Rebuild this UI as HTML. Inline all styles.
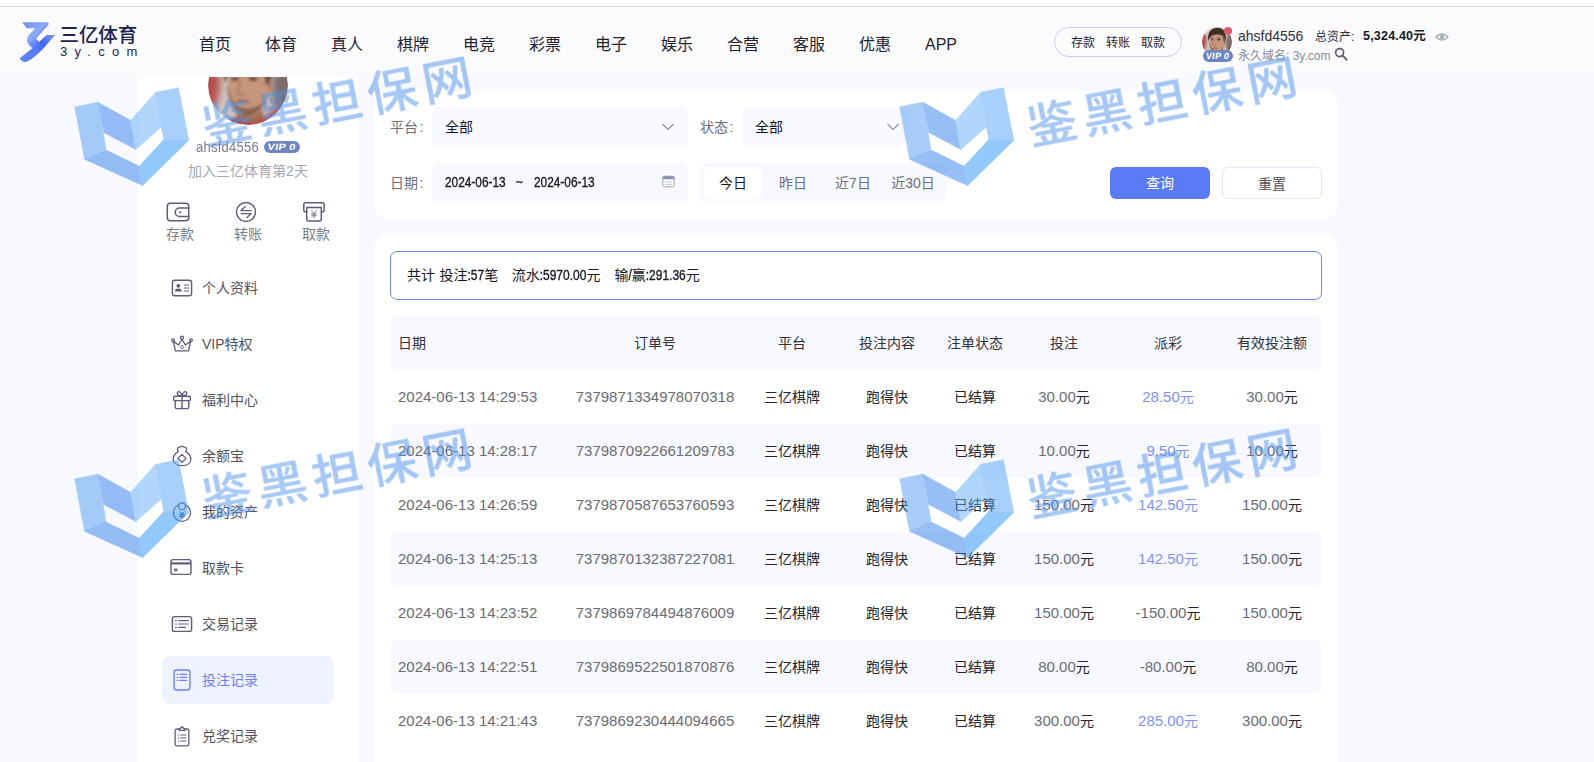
<!DOCTYPE html>
<html lang="zh-CN">
<head>
<meta charset="utf-8">
<title>投注记录 - 三亿体育</title>
<style>
*{box-sizing:border-box;margin:0;padding:0}
html,body{width:1594px;height:762px;overflow:hidden;background:#f8f9fe}
body{font-family:"Liberation Sans","Noto Sans CJK SC",sans-serif;color:#30313d;position:relative;font-size:14px}
.abs{position:absolute}
/* top strip */
#topstrip{left:0;top:0;width:1594px;height:6px;background:#fff}
#topline{left:0;top:6px;width:1594px;height:1px;background:#d9d9dc}
/* header */
#header{left:0;top:7px;width:1594px;height:70px;background:#fbfbfe;z-index:5}
.nav{position:absolute;top:26px;font-size:16px;line-height:24px;color:#1f2233;width:66px;text-align:center;white-space:nowrap}
#logo-cn{left:59.5px;top:16px;font-size:19.5px;line-height:24px;font-weight:500;color:#1e2350;letter-spacing:-0.1px;white-space:nowrap}
#logo-en{left:60px;top:37px;font-size:13px;line-height:16px;color:#1e2350;letter-spacing:7.3px;white-space:nowrap}
#pill{left:1054px;top:20px;width:128px;height:30px;border:1px solid #c9ccf7;border-radius:15px;background:#fcfcff;font-size:12px;line-height:28px;color:#23242e;white-space:nowrap}
#pill span{position:absolute;top:1px}
#hd-ava{left:1202px;top:20px;width:30px;height:30px;border-radius:50%;overflow:hidden}
.vip{position:absolute;background:#6d86c2;border-radius:7px;color:#fff;font-weight:700;font-style:italic;text-align:center;white-space:nowrap}
#hd-name{left:1238px;top:19.6px;font-size:14px;line-height:18px;color:#30313d;white-space:nowrap}
#hd-asset{left:1315px;top:22px;font-size:12px;line-height:16px;color:#30313d;white-space:nowrap}
#hd-amt{left:1363px;top:21px;letter-spacing:.2px;font-size:12.5px;line-height:16px;font-weight:700;color:#16171f;white-space:nowrap}
#hd-dom{left:1238px;top:40.5px;font-size:12px;line-height:16px;color:#8a8c99;white-space:nowrap}
/* sidebar */
#side{left:138px;top:76px;width:220px;height:686px;background:#fff}
.mi{position:absolute;left:64px;font-size:14px;line-height:20px;color:#50525f;white-space:nowrap}
.qa{position:absolute;font-size:14px;line-height:18px;color:#7a7c8a;width:60px;text-align:center;white-space:nowrap}
/* content */
.card{position:absolute;background:#fff;border-radius:13px}
.lbl{position:absolute;font-size:14px;line-height:20px;color:#6c6e7c;white-space:nowrap}
.inp{position:absolute;background:#f8f9fe;border-radius:8px;height:40px}
.inp span{position:absolute;top:10px;font-size:14px;line-height:20px;color:#16171f;white-space:nowrap}

.dt{font-size:15px !important;top:9.3px !important;transform:scaleX(.79);transform-origin:0 50%;-webkit-text-stroke:.35px #16171f}
.qb{position:absolute;top:173px;width:60px;text-align:center;font-size:14px;line-height:20px;color:#6c6e7c;white-space:nowrap}
.btn{position:absolute;top:167px;width:100px;height:32px;border-radius:6px;text-align:center;font-size:14px;line-height:32px;white-space:nowrap}
#sum{font-size:14px;line-height:20px;color:#16171f;white-space:nowrap}
.cd{display:inline-block;font-weight:400;font-size:12px;transform:scaleY(1.2);transform-origin:50% 72%;-webkit-text-stroke:.3px #16171f}
.th{position:absolute;width:120px;text-align:center;font-size:14px;line-height:20px;color:#30313d;white-space:nowrap}
.td{position:absolute;width:120px;text-align:center;font-size:14px;line-height:20px;color:#50525f;white-space:nowrap}
.td.dk{color:#23242e}
.td.num{color:#6a6b76;font-size:15px}
.td.num i{font-style:normal;color:#23242e;font-size:14px}
.td.win,.td.win i{color:#7d93f3}
.face{background:radial-gradient(ellipse 34% 46% at 50% 52%,#c99479 0,#b57d62 60%,rgba(150,90,70,0) 100%),radial-gradient(ellipse 42% 30% at 50% 18%,#4a3328 0,#5a3d30 70%,rgba(90,60,48,0) 100%),linear-gradient(90deg,#b8423f 0,#c9b3ab 35%,#d8d0cc 65%,#a63a3a 100%)}
</style>
</head>
<body>
<div class="abs" id="topstrip"></div>
<div class="abs" id="topline"></div>

<!-- SIDEBAR -->
<div class="abs" id="side">
<div class="abs" style="left:24px;top:580px;width:172px;height:48px;border-radius:8px;background:#eff2ff"></div>

<div class="abs" style="left:70px;top:-31.5px;width:80px;height:80px;border-radius:50%;overflow:hidden"><svg width="80" height="80" viewBox="0 0 80 80" style="display:block">
<defs><filter id="blb" x="-20%" y="-20%" width="140%" height="140%"><feGaussianBlur stdDeviation="1.5"/></filter><filter id="bbb" x="-30%" y="-30%" width="160%" height="160%"><feGaussianBlur stdDeviation="3.5"/></filter><clipPath id="ccb"><circle cx="40" cy="40" r="40"/></clipPath></defs>
<g clip-path="url(#ccb)">
<rect width="80" height="80" fill="#cdc2be"/>
<g filter="url(#bbb)">
<ellipse cx="1" cy="38" rx="11" ry="26" fill="#b5504b"/>
<ellipse cx="77" cy="44" rx="13" ry="28" fill="#7d6c69"/>
<ellipse cx="74" cy="74" rx="16" ry="10" fill="#a9423e"/>
<ellipse cx="14" cy="8" rx="16" ry="10" fill="#ddd6d2"/>
</g>
<g filter="url(#blb)">
<path d="M10,86 Q18,73 30,72 L52,71 Q64,73 72,86 Z" fill="#b0504a"/>
<path d="M27,58 L54,56 L55,74 Q42,80 29,73 Z" fill="#a06c56"/>
<ellipse cx="60.5" cy="42" rx="3.6" ry="7" fill="#b47c66"/>
<ellipse cx="40" cy="43" rx="20.5" ry="29" fill="#c6967d"/>
<path d="M19,40 Q21,66 38,72 Q54,70 60,48 Q56,60 46,62 Q36,66 28,60 Q22,52 19,40 Z" fill="#7d5a49" opacity=".85"/>
<path d="M17,38 Q12,5 40,2 Q67,3 63,38 Q61,28 56,23 Q42,18 28,22 Q20,26 17,38 Z" fill="#3f2d24"/>
<path d="M56,20 Q62,28 61,40 L57,38 Q58,28 54,22 Z" fill="#5a4236"/>
<ellipse cx="27" cy="34" rx="4" ry="1.6" fill="#3a2822"/>
<ellipse cx="45" cy="34" rx="4.4" ry="1.7" fill="#3a2822"/>
<path d="M21,30 Q27,27 32,30 M39,30 Q45,27 51,30" stroke="#4e382e" stroke-width="1.6" fill="none"/>
<path d="M33,36 Q30,46 29,48 Q32,51 37,49" stroke="#9a6a55" stroke-width="1.6" fill="none"/>
<path d="M28,57 Q34,55 42,57" stroke="#7a4a40" stroke-width="1.8" fill="none"/>
</g>
</g></svg></div>
<div class="abs" style="left:58px;top:62.5px;font-size:13px;line-height:18px;color:#7c7b93;letter-spacing:0.25px;white-space:nowrap;transform:scaleY(1.1);transform-origin:0 60%">ahsfd4556</div>
<div class="vip" style="left:126px;top:65px;width:36px;height:12px;font-size:9px;line-height:12px;border-radius:6px"><span style="display:inline-block;transform:scaleX(1.2) skewX(-9deg);font-style:normal;letter-spacing:.3px">VIP 0</span></div>
<div class="abs" style="left:0;top:86px;width:220px;text-align:center;font-size:14px;line-height:18px;color:#a4a6b3;white-space:nowrap">加入三亿体育第2天</div>
<svg class="abs" style="left:28.1px;top:123.9px" width="24" height="24" viewBox="0 0 24 24" fill="none" stroke="#5e5c7a" stroke-width="1.5" stroke-linecap="round" stroke-linejoin="round"><rect x="1.3" y="3.2" width="21.4" height="17.6" rx="3"/><path d="M22.7,8 H13.5 a4,4 0 0 0 0,8.6 H22.7"/><circle cx="14.2" cy="12.3" r="1.1" fill="#5e5c7a" stroke="none"/></svg>
<svg class="abs" style="left:96.2px;top:123.9px" width="24" height="24" viewBox="0 0 24 24" fill="none" stroke="#5e5c7a" stroke-width="1.4" stroke-linecap="round" stroke-linejoin="round"><circle cx="12" cy="12" r="9.5"/><path d="M11.2,6.8 L7,10.6 H17.2 M7,13.6 H17.2 L13,17.4"/></svg>
<svg class="abs" style="left:164.1px;top:123.5px" width="24" height="24" viewBox="0 0 24 24" fill="none" stroke="#5e5c7a" stroke-width="1.5" stroke-linecap="round" stroke-linejoin="round"><path d="M4.6,11.8 H3.4 a1.6,1.6 0 0 1 -1.6,-1.6 V4.4 a1.6,1.6 0 0 1 1.6,-1.6 H20.6 a1.6,1.6 0 0 1 1.6,1.6 V10.2 a1.6,1.6 0 0 1 -1.6,1.6 H19.4"/><path d="M4.7,7.4 H19.3 V19.4 a1.6,1.6 0 0 1 -1.6,1.6 H6.3 a1.6,1.6 0 0 1 -1.6,-1.6 Z"/><path d="M9.6,10.8 L12,13.8 L14.4,10.8 M12,13.8 V17.8 M9.6,14 H14.4 M9.6,15.8 H14.4" stroke-width="0.8"/></svg>
<svg class="abs" style="left:31.8px;top:199.9px" width="24" height="24" viewBox="0 0 24 24" fill="none" stroke="#5e5c7a" stroke-width="1.4" stroke-linecap="round" stroke-linejoin="round"><rect x="2.4" y="4.3" width="19.2" height="15.4" rx="2.2"/><circle cx="8.3" cy="9.8" r="1.9" fill="#5e5c7a" stroke="none"/><path d="M4.9,15.6 a3.4,3.2 0 0 1 6.8,0 Z" fill="#5e5c7a" stroke="none"/><path d="M14.4,9 H18.6 M14.4,12 H18.6 M14.4,15 H18.6" stroke-width="1.1"/></svg>
<svg class="abs" style="left:32.2px;top:256.0px" width="24" height="24" viewBox="0 0 24 24" fill="none" stroke="#5e5c7a" stroke-width="1.3" stroke-linecap="round" stroke-linejoin="round"><path d="M5.4,18.8 H18.6 L20.6,9.4 L15.4,13 L12,7.2 L8.6,13 L3.4,9.4 Z"/><circle cx="12" cy="5.6" r="1.5"/><circle cx="3" cy="8.2" r="1.3"/><circle cx="21" cy="8.2" r="1.3"/><path d="M12,13.4 L10.4,15.8 L12,17 L13.6,15.8 Z" stroke-width="0.9"/></svg>
<svg class="abs" style="left:31.7px;top:311.9px" width="24" height="24" viewBox="0 0 24 24" fill="none" stroke="#5e5c7a" stroke-width="1.4" stroke-linecap="round" stroke-linejoin="round"><rect x="3.7" y="8.2" width="16.6" height="4.4" rx="1"/><path d="M5.2,12.6 V19 a1.6,1.6 0 0 0 1.6,1.6 H17.2 a1.6,1.6 0 0 0 1.6,-1.6 V12.6"/><path d="M12,8.2 V20.6"/><path d="M12,8 C9,8 6.6,6.6 7.4,4.6 C8.4,2.4 11.2,4 12,8 C12.8,4 15.6,2.4 16.6,4.6 C17.4,6.6 15,8 12,8 Z"/></svg>
<svg class="abs" style="left:32.2px;top:367.6px" width="24" height="24" viewBox="0 0 24 24" fill="none" stroke="#5e5c7a" stroke-width="1.3" stroke-linecap="round" stroke-linejoin="round"><path d="M8.4,7.4 C6.6,5.4 7.6,2.8 9.8,3.2 C10.8,2 13.2,2 14.2,3.2 C16.4,2.8 17.4,5.4 15.6,7.4 C19,9.4 20.8,12.4 20.8,15.2 C20.8,19 17.4,21.6 12,21.6 C6.6,21.6 3.2,19 3.2,15.2 C3.2,12.4 5,9.4 8.4,7.4 Z"/><path d="M12,10.4 L16,14.4 L12,18.4 L8,14.4 Z"/></svg>
<svg class="abs" style="left:32.2px;top:423.8px" width="24" height="24" viewBox="0 0 24 24" fill="none" stroke="#5e5c7a" stroke-width="1.2" stroke-linecap="round" stroke-linejoin="round"><circle cx="12" cy="12.8" r="8.6"/><circle cx="12" cy="6.2" r="3.4" fill="#fff"/><path d="M9.4,11 L12,14.2 L14.6,11 M12,14.2 V18.4 M9.6,14.6 H14.4 M9.6,16.4 H14.4" stroke-width="1"/></svg>
<svg class="abs" style="left:31.4px;top:479.4px" width="24" height="24" viewBox="0 0 24 24" fill="none" stroke="#5e5c7a" stroke-width="1.4" stroke-linecap="round" stroke-linejoin="round"><rect x="2" y="4.6" width="20" height="14.8" rx="2.2"/><path d="M2,8.4 H22" stroke-width="2.2" stroke-linecap="butt"/><rect x="5.2" y="13.6" width="3.2" height="2.6" fill="#5e5c7a" stroke="none"/></svg>
<svg class="abs" style="left:31.8px;top:535.6px" width="24" height="24" viewBox="0 0 24 24" fill="none" stroke="#5e5c7a" stroke-width="1.4" stroke-linecap="round" stroke-linejoin="round"><rect x="2.4" y="4.6" width="19.2" height="14.8" rx="2.2"/><path d="M5.6,8.6 H6.4 M8.8,8.6 H18.4 M5.6,12 H6.4 M8.8,12 H18.4 M5.6,15.4 H6.4 M8.8,15.4 H15.4" stroke-width="1.2"/></svg>
<svg class="abs" style="left:32.1px;top:591.5px" width="24" height="24" viewBox="0 0 24 24" fill="none" stroke="#6c7ff3" stroke-width="1.4" stroke-linecap="round" stroke-linejoin="round"><rect x="4.1" y="2" width="15.8" height="20" rx="2.4"/><path d="M7.2,6.4 H7.8 M10,6.4 H16.8 M7.2,9.4 H7.8 M10,9.4 H16.8 M7.2,12.4 H7.8 M10,12.4 H16.8" stroke-width="1.2"/></svg>
<svg class="abs" style="left:32.2px;top:647.8px" width="24" height="24" viewBox="0 0 24 24" fill="none" stroke="#5e5c7a" stroke-width="1.3" stroke-linecap="round" stroke-linejoin="round"><path d="M8.6,5 H6.9 a1.8,1.8 0 0 0 -1.8,1.8 V20 a1.8,1.8 0 0 0 1.8,1.8 H17.1 a1.8,1.8 0 0 0 1.8,-1.8 V6.8 a1.8,1.8 0 0 0 -1.8,-1.8 H15.4"/><path d="M9,6.4 V4.6 H10.6 a1.4,1.6 0 0 1 2.8,0 H15 V6.4 Z"/><path d="M8.2,11 H8.8 M10.6,11 H15.8 M8.2,14 H8.8 M10.6,14 H15.8 M8.2,17 H8.8 M10.6,17 H15.8" stroke-width="1.1"/></svg>
<div class="qa" style="left:12px;top:149px">存款</div>
<div class="qa" style="left:80px;top:149px">转账</div>
<div class="qa" style="left:148px;top:149px">取款</div>
<div class="mi" style="top:202px">个人资料</div>
<div class="mi" style="top:258px">VIP特权</div>
<div class="mi" style="top:314px">福利中心</div>
<div class="mi" style="top:370px">余额宝</div>
<div class="mi" style="top:426px">我的资产</div>
<div class="mi" style="top:482px">取款卡</div>
<div class="mi" style="top:538px">交易记录</div>
<div class="mi" style="top:594px;color:#6c81f2">投注记录</div>
<div class="mi" style="top:650px">兑奖记录</div>
</div>

<!-- CONTENT -->
<div id="content">
<div class="card" style="left:374px;top:91px;width:964px;height:128px"></div>
<div class="lbl" style="left:390px;top:117px">平台<span style="margin-left:1.5px">:</span></div>
<div class="inp" style="left:432px;top:107px;width:256px"><span style="left:13px">全部</span>
<svg class="abs" style="left:229px;top:15px" width="14" height="10" viewBox="0 0 14 10"><path d="M1.5,2 L7,7.5 L12.5,2" fill="none" stroke="#8f919e" stroke-width="1.2"/></svg></div>
<div class="lbl" style="left:700px;top:117px">状态<span style="margin-left:1.5px">:</span></div>
<div class="inp" style="left:742px;top:107px;width:164px"><span style="left:13px">全部</span>
<svg class="abs" style="left:144px;top:15px" width="14" height="10" viewBox="0 0 14 10"><path d="M1.5,2 L7,7.5 L12.5,2" fill="none" stroke="#8f919e" stroke-width="1.2"/></svg></div>
<div class="lbl" style="left:390px;top:173px">日期<span style="margin-left:1.5px">:</span></div>
<div class="inp" style="left:432px;top:163px;width:256px"><span class="dt" style="left:13px">2024-06-13</span><span class="dt" style="left:84px">~</span><span class="dt" style="left:102px">2024-06-13</span>
<svg class="abs" style="left:230px;top:12px" width="13" height="13" viewBox="0 0 13 13"><rect x="0.8" y="1.2" width="11.4" height="10.6" rx="1.6" fill="#fff" stroke="#9b9dbd" stroke-width="1"/><rect x="0.8" y="1.2" width="11.4" height="3" rx="1.2" fill="#8d8fb0"/><path d="M3,7h7M3,9.4h7" stroke="#c3c4d6" stroke-width="1"/></svg></div>
<div class="inp" style="left:700px;top:163px;width:247px"></div>
<div class="abs" style="left:704px;top:167px;width:58px;height:32px;border-radius:6px;background:#fff"></div>
<div class="qb" style="left:703px;color:#16171f">今日</div>
<div class="qb" style="left:763px">昨日</div>
<div class="qb" style="left:823px">近7日</div>
<div class="qb" style="left:883px">近30日</div>
<div class="btn" style="left:1110px;background:#5b7bf6;color:#fff">查询</div>
<div class="btn" style="left:1222px;background:#fff;color:#50525f;border:1px solid #e3e8fb">重置</div>

<div class="card" style="left:374px;top:235px;width:964px;height:560px"></div>
<div class="abs" style="left:390px;top:251px;width:932px;height:49px;border:1px solid #7286f1;border-radius:7px;background:#fff"></div>
<div class="abs" id="sum" style="left:407px;top:264.5px">共计<span style="margin-left:4.5px">投注<b class="cd">:57</b>笔</span><span style="margin-left:13.5px">流水<b class="cd">:5970.00</b>元</span><span style="margin-left:14px">输<b class="cd">/</b>赢<b class="cd">:291.36</b>元</span></div>
<div class="abs" style="left:390px;top:316px;width:932px;height:54px;border-radius:8px;background:#f8f9fe"></div>
<div class="th" style="left:398px;top:333px;width:auto;text-align:left">日期</div>
<div class="th" style="left:595px;top:333px">订单号</div>
<div class="th" style="left:732px;top:333px">平台</div>
<div class="th" style="left:827px;top:333px">投注内容</div>
<div class="th" style="left:915px;top:333px">注单状态</div>
<div class="th" style="left:1004px;top:333px">投注</div>
<div class="th" style="left:1108px;top:333px">派彩</div>
<div class="th" style="left:1212px;top:333px">有效投注额</div>
<div class="td num" style="left:398px;top:387px;width:auto;text-align:left">2024-06-13 14:29:53</div><div class="td num" style="left:595px;top:387px;width:200px;margin-left:-40px">7379871334978070318</div><div class="td dk" style="left:732px;top:387px">三亿棋牌</div><div class="td dk" style="left:827px;top:387px">跑得快</div><div class="td dk" style="left:915px;top:387px">已结算</div><div class="td num" style="left:1004px;top:387px">30.00<i>元</i></div><div class="td num win" style="left:1108px;top:387px">28.50<i>元</i></div><div class="td num" style="left:1212px;top:387px">30.00<i>元</i></div>
<div class="abs" style="left:390px;top:424px;width:932px;height:54px;border-radius:8px;background:#f8f9fe"></div>
<div class="td num" style="left:398px;top:441px;width:auto;text-align:left">2024-06-13 14:28:17</div><div class="td num" style="left:595px;top:441px;width:200px;margin-left:-40px">7379870922661209783</div><div class="td dk" style="left:732px;top:441px">三亿棋牌</div><div class="td dk" style="left:827px;top:441px">跑得快</div><div class="td dk" style="left:915px;top:441px">已结算</div><div class="td num" style="left:1004px;top:441px">10.00<i>元</i></div><div class="td num win" style="left:1108px;top:441px">9.50<i>元</i></div><div class="td num" style="left:1212px;top:441px">10.00<i>元</i></div>
<div class="td num" style="left:398px;top:495px;width:auto;text-align:left">2024-06-13 14:26:59</div><div class="td num" style="left:595px;top:495px;width:200px;margin-left:-40px">7379870587653760593</div><div class="td dk" style="left:732px;top:495px">三亿棋牌</div><div class="td dk" style="left:827px;top:495px">跑得快</div><div class="td dk" style="left:915px;top:495px">已结算</div><div class="td num" style="left:1004px;top:495px">150.00<i>元</i></div><div class="td num win" style="left:1108px;top:495px">142.50<i>元</i></div><div class="td num" style="left:1212px;top:495px">150.00<i>元</i></div>
<div class="abs" style="left:390px;top:532px;width:932px;height:54px;border-radius:8px;background:#f8f9fe"></div>
<div class="td num" style="left:398px;top:549px;width:auto;text-align:left">2024-06-13 14:25:13</div><div class="td num" style="left:595px;top:549px;width:200px;margin-left:-40px">7379870132387227081</div><div class="td dk" style="left:732px;top:549px">三亿棋牌</div><div class="td dk" style="left:827px;top:549px">跑得快</div><div class="td dk" style="left:915px;top:549px">已结算</div><div class="td num" style="left:1004px;top:549px">150.00<i>元</i></div><div class="td num win" style="left:1108px;top:549px">142.50<i>元</i></div><div class="td num" style="left:1212px;top:549px">150.00<i>元</i></div>
<div class="td num" style="left:398px;top:603px;width:auto;text-align:left">2024-06-13 14:23:52</div><div class="td num" style="left:595px;top:603px;width:200px;margin-left:-40px">7379869784494876009</div><div class="td dk" style="left:732px;top:603px">三亿棋牌</div><div class="td dk" style="left:827px;top:603px">跑得快</div><div class="td dk" style="left:915px;top:603px">已结算</div><div class="td num" style="left:1004px;top:603px">150.00<i>元</i></div><div class="td num" style="left:1108px;top:603px">-150.00<i>元</i></div><div class="td num" style="left:1212px;top:603px">150.00<i>元</i></div>
<div class="abs" style="left:390px;top:640px;width:932px;height:54px;border-radius:8px;background:#f8f9fe"></div>
<div class="td num" style="left:398px;top:657px;width:auto;text-align:left">2024-06-13 14:22:51</div><div class="td num" style="left:595px;top:657px;width:200px;margin-left:-40px">7379869522501870876</div><div class="td dk" style="left:732px;top:657px">三亿棋牌</div><div class="td dk" style="left:827px;top:657px">跑得快</div><div class="td dk" style="left:915px;top:657px">已结算</div><div class="td num" style="left:1004px;top:657px">80.00<i>元</i></div><div class="td num" style="left:1108px;top:657px">-80.00<i>元</i></div><div class="td num" style="left:1212px;top:657px">80.00<i>元</i></div>
<div class="td num" style="left:398px;top:711px;width:auto;text-align:left">2024-06-13 14:21:43</div><div class="td num" style="left:595px;top:711px;width:200px;margin-left:-40px">7379869230444094665</div><div class="td dk" style="left:732px;top:711px">三亿棋牌</div><div class="td dk" style="left:827px;top:711px">跑得快</div><div class="td dk" style="left:915px;top:711px">已结算</div><div class="td num" style="left:1004px;top:711px">300.00<i>元</i></div><div class="td num win" style="left:1108px;top:711px">285.00<i>元</i></div><div class="td num" style="left:1212px;top:711px">300.00<i>元</i></div>
</div>

<!-- HEADER -->
<div class="abs" id="header">
<svg class="abs" style="left:14px;top:7px" width="50" height="54" viewBox="0 0 706 762">
<defs>
<linearGradient id="lg1" x1="0" y1="0" x2="1" y2="1"><stop offset="0" stop-color="#6f8df8"/><stop offset="0.45" stop-color="#8eaafc"/><stop offset="0.75" stop-color="#4a6df4"/><stop offset="1" stop-color="#5a7cf6"/></linearGradient>
<linearGradient id="lg2" x1="1" y1="0" x2="0" y2="1"><stop offset="0" stop-color="#7c99fa"/><stop offset="0.35" stop-color="#3f64f3"/><stop offset="0.6" stop-color="#5a7cf6"/><stop offset="1" stop-color="#6283f7"/></linearGradient>
</defs>
<path d="M580,295 L460,295 L250,490 L80,625 Q110,690 190,672 Q300,610 420,480 Z" fill="url(#lg2)"/>
<path d="M115,115 L478,115 Q502,122 486,150 L310,350 L410,440 L405,485 L290,505 Q140,410 200,310 L300,200 L180,200 Z" fill="url(#lg1)"/>
</svg>
<div class="abs" id="logo-cn">三亿体育</div>
<div class="abs" id="logo-en">3y.com</div>
<div class="nav" style="left:182px">首页</div><div class="nav" style="left:248px">体育</div><div class="nav" style="left:314px">真人</div><div class="nav" style="left:380px">棋牌</div><div class="nav" style="left:446px">电竞</div><div class="nav" style="left:512px">彩票</div><div class="nav" style="left:578px">电子</div><div class="nav" style="left:644px">娱乐</div><div class="nav" style="left:710px">合营</div><div class="nav" style="left:776px">客服</div><div class="nav" style="left:842px">优惠</div><div class="nav" style="left:908px">APP</div>
<div class="abs" id="pill"><span style="left:16px">存款</span><span style="left:51px">转账</span><span style="left:86px">取款</span></div>
<div class="abs" id="hd-ava"><svg width="30" height="30" viewBox="0 0 80 80" style="display:block">
<defs><filter id="bla" x="-20%" y="-20%" width="140%" height="140%"><feGaussianBlur stdDeviation="1.5"/></filter><filter id="bba" x="-30%" y="-30%" width="160%" height="160%"><feGaussianBlur stdDeviation="3.5"/></filter><clipPath id="cca"><circle cx="40" cy="40" r="40"/></clipPath></defs>
<g clip-path="url(#cca)">
<rect width="80" height="80" fill="#cdc2be"/>
<g filter="url(#bba)">
<ellipse cx="1" cy="38" rx="11" ry="26" fill="#b5504b"/>
<ellipse cx="77" cy="44" rx="13" ry="28" fill="#7d6c69"/>
<ellipse cx="74" cy="74" rx="16" ry="10" fill="#a9423e"/>
<ellipse cx="14" cy="8" rx="16" ry="10" fill="#ddd6d2"/>
</g>
<g filter="url(#bla)">
<path d="M10,86 Q18,73 30,72 L52,71 Q64,73 72,86 Z" fill="#b0504a"/>
<path d="M27,58 L54,56 L55,74 Q42,80 29,73 Z" fill="#a06c56"/>
<ellipse cx="60.5" cy="42" rx="3.6" ry="7" fill="#b47c66"/>
<ellipse cx="40" cy="43" rx="20.5" ry="29" fill="#c6967d"/>
<path d="M19,40 Q21,66 38,72 Q54,70 60,48 Q56,60 46,62 Q36,66 28,60 Q22,52 19,40 Z" fill="#7d5a49" opacity=".85"/>
<path d="M17,38 Q12,5 40,2 Q67,3 63,38 Q61,28 56,23 Q42,18 28,22 Q20,26 17,38 Z" fill="#3f2d24"/>
<path d="M56,20 Q62,28 61,40 L57,38 Q58,28 54,22 Z" fill="#5a4236"/>
<ellipse cx="27" cy="34" rx="4" ry="1.6" fill="#3a2822"/>
<ellipse cx="45" cy="34" rx="4.4" ry="1.7" fill="#3a2822"/>
<path d="M21,30 Q27,27 32,30 M39,30 Q45,27 51,30" stroke="#4e382e" stroke-width="1.6" fill="none"/>
<path d="M33,36 Q30,46 29,48 Q32,51 37,49" stroke="#9a6a55" stroke-width="1.6" fill="none"/>
<path d="M28,57 Q34,55 42,57" stroke="#7a4a40" stroke-width="1.8" fill="none"/>
</g>
</g></svg></div>
<div class="abs" style="left:1224px;top:20px;width:8px;height:8px;border-radius:50%;background:#e2586d"></div>
<div class="vip" style="left:1203px;top:43px;width:30px;height:12px;font-size:9px;line-height:12px"><span style="display:inline-block;transform:scaleX(1.0) skewX(-9deg);font-style:normal;letter-spacing:.3px">VIP 0</span></div>
<div class="abs" id="hd-name">ahsfd4556</div>
<div class="abs" id="hd-asset">总资产:</div>
<div class="abs" id="hd-amt">5,324.40元</div>
<svg class="abs" style="left:1435px;top:24px" width="14" height="12" viewBox="0 0 14 12"><path d="M1,6 Q7,0 13,6 Q7,12 1,6 Z" fill="none" stroke="#a9abb6" stroke-width="1.4"/><circle cx="7" cy="6" r="2.2" fill="#a9abb6"/></svg>
<div class="abs" id="hd-dom">永久域名: 3y.com</div>
<svg class="abs" style="left:1334px;top:40px" width="14" height="14" viewBox="0 0 14 14"><circle cx="5.6" cy="5.6" r="4" fill="none" stroke="#5c5e6b" stroke-width="1.7"/><path d="M8.6,8.6 L12.6,12.6" stroke="#5c5e6b" stroke-width="2" stroke-linecap="round"/></svg>
</div>

<!-- WATERMARKS -->
<div id="wm"><svg class="abs" style="left:0;top:0;z-index:10;pointer-events:none" width="1594" height="762" viewBox="0 0 1594 762">
<g transform="translate(0,0)" opacity="0.5">
<polygon points="74.8,106.9 97.9,102.3 106.0,150.1 84.6,159.2" fill="rgb(81,155,241)" stroke="rgb(81,155,241)" stroke-width="0.7" stroke-linejoin="round"/>
<polygon points="97.9,102.3 130.6,120.4 135.9,149.4 103.9,132.5" fill="rgb(49,125,237)" stroke="rgb(49,125,237)" stroke-width="0.7" stroke-linejoin="round"/>
<polygon points="130.6,120.4 155.5,92.4 161.5,126.8 135.9,149.4" fill="rgb(97,173,247)" stroke="rgb(97,173,247)" stroke-width="0.7" stroke-linejoin="round"/>
<polygon points="155.5,92.4 178.4,87.8 188.7,140.3 163.8,139.6 161.5,126.8" fill="rgb(83,161,245)" stroke="rgb(83,161,245)" stroke-width="0.7" stroke-linejoin="round"/>
<polygon points="84.6,159.2 106.0,150.1 139.2,166.3 142.7,185.6" fill="rgb(47,125,235)" stroke="rgb(47,125,235)" stroke-width="0.7" stroke-linejoin="round"/>
<polygon points="139.2,166.3 163.8,139.6 188.7,140.3 142.7,185.6" fill="rgb(39,145,247)" stroke="rgb(39,145,247)" stroke-width="0.7" stroke-linejoin="round"/>
<g transform="translate(337,101.5) rotate(-11) scale(1,0.93)"><text x="3" y="18.5" text-anchor="middle" font-family="'Liberation Sans','Noto Sans CJK SC',sans-serif" font-size="50" font-weight="500" letter-spacing="6" fill="rgb(79,145,233)" stroke="rgb(79,145,233)" stroke-width="0.3" stroke-linejoin="round">鉴黑担保网</text></g>
</g>
<g transform="translate(825,0)" opacity="0.5">
<polygon points="74.8,106.9 97.9,102.3 106.0,150.1 84.6,159.2" fill="rgb(81,155,241)" stroke="rgb(81,155,241)" stroke-width="0.7" stroke-linejoin="round"/>
<polygon points="97.9,102.3 130.6,120.4 135.9,149.4 103.9,132.5" fill="rgb(49,125,237)" stroke="rgb(49,125,237)" stroke-width="0.7" stroke-linejoin="round"/>
<polygon points="130.6,120.4 155.5,92.4 161.5,126.8 135.9,149.4" fill="rgb(97,173,247)" stroke="rgb(97,173,247)" stroke-width="0.7" stroke-linejoin="round"/>
<polygon points="155.5,92.4 178.4,87.8 188.7,140.3 163.8,139.6 161.5,126.8" fill="rgb(83,161,245)" stroke="rgb(83,161,245)" stroke-width="0.7" stroke-linejoin="round"/>
<polygon points="84.6,159.2 106.0,150.1 139.2,166.3 142.7,185.6" fill="rgb(47,125,235)" stroke="rgb(47,125,235)" stroke-width="0.7" stroke-linejoin="round"/>
<polygon points="139.2,166.3 163.8,139.6 188.7,140.3 142.7,185.6" fill="rgb(39,145,247)" stroke="rgb(39,145,247)" stroke-width="0.7" stroke-linejoin="round"/>
<g transform="translate(337,101.5) rotate(-11) scale(1,0.93)"><text x="3" y="18.5" text-anchor="middle" font-family="'Liberation Sans','Noto Sans CJK SC',sans-serif" font-size="50" font-weight="500" letter-spacing="6" fill="rgb(79,145,233)" stroke="rgb(79,145,233)" stroke-width="0.3" stroke-linejoin="round">鉴黑担保网</text></g>
</g>
<g transform="translate(0,372)" opacity="0.5">
<polygon points="74.8,106.9 97.9,102.3 106.0,150.1 84.6,159.2" fill="rgb(81,155,241)" stroke="rgb(81,155,241)" stroke-width="0.7" stroke-linejoin="round"/>
<polygon points="97.9,102.3 130.6,120.4 135.9,149.4 103.9,132.5" fill="rgb(49,125,237)" stroke="rgb(49,125,237)" stroke-width="0.7" stroke-linejoin="round"/>
<polygon points="130.6,120.4 155.5,92.4 161.5,126.8 135.9,149.4" fill="rgb(97,173,247)" stroke="rgb(97,173,247)" stroke-width="0.7" stroke-linejoin="round"/>
<polygon points="155.5,92.4 178.4,87.8 188.7,140.3 163.8,139.6 161.5,126.8" fill="rgb(83,161,245)" stroke="rgb(83,161,245)" stroke-width="0.7" stroke-linejoin="round"/>
<polygon points="84.6,159.2 106.0,150.1 139.2,166.3 142.7,185.6" fill="rgb(47,125,235)" stroke="rgb(47,125,235)" stroke-width="0.7" stroke-linejoin="round"/>
<polygon points="139.2,166.3 163.8,139.6 188.7,140.3 142.7,185.6" fill="rgb(39,145,247)" stroke="rgb(39,145,247)" stroke-width="0.7" stroke-linejoin="round"/>
<g transform="translate(337,101.5) rotate(-11) scale(1,0.93)"><text x="3" y="18.5" text-anchor="middle" font-family="'Liberation Sans','Noto Sans CJK SC',sans-serif" font-size="50" font-weight="500" letter-spacing="6" fill="rgb(79,145,233)" stroke="rgb(79,145,233)" stroke-width="0.3" stroke-linejoin="round">鉴黑担保网</text></g>
</g>
<g transform="translate(825,372)" opacity="0.5">
<polygon points="74.8,106.9 97.9,102.3 106.0,150.1 84.6,159.2" fill="rgb(81,155,241)" stroke="rgb(81,155,241)" stroke-width="0.7" stroke-linejoin="round"/>
<polygon points="97.9,102.3 130.6,120.4 135.9,149.4 103.9,132.5" fill="rgb(49,125,237)" stroke="rgb(49,125,237)" stroke-width="0.7" stroke-linejoin="round"/>
<polygon points="130.6,120.4 155.5,92.4 161.5,126.8 135.9,149.4" fill="rgb(97,173,247)" stroke="rgb(97,173,247)" stroke-width="0.7" stroke-linejoin="round"/>
<polygon points="155.5,92.4 178.4,87.8 188.7,140.3 163.8,139.6 161.5,126.8" fill="rgb(83,161,245)" stroke="rgb(83,161,245)" stroke-width="0.7" stroke-linejoin="round"/>
<polygon points="84.6,159.2 106.0,150.1 139.2,166.3 142.7,185.6" fill="rgb(47,125,235)" stroke="rgb(47,125,235)" stroke-width="0.7" stroke-linejoin="round"/>
<polygon points="139.2,166.3 163.8,139.6 188.7,140.3 142.7,185.6" fill="rgb(39,145,247)" stroke="rgb(39,145,247)" stroke-width="0.7" stroke-linejoin="round"/>
<g transform="translate(337,101.5) rotate(-11) scale(1,0.93)"><text x="3" y="18.5" text-anchor="middle" font-family="'Liberation Sans','Noto Sans CJK SC',sans-serif" font-size="50" font-weight="500" letter-spacing="6" fill="rgb(79,145,233)" stroke="rgb(79,145,233)" stroke-width="0.3" stroke-linejoin="round">鉴黑担保网</text></g>
</g>
</svg></div>
</body>
</html>
